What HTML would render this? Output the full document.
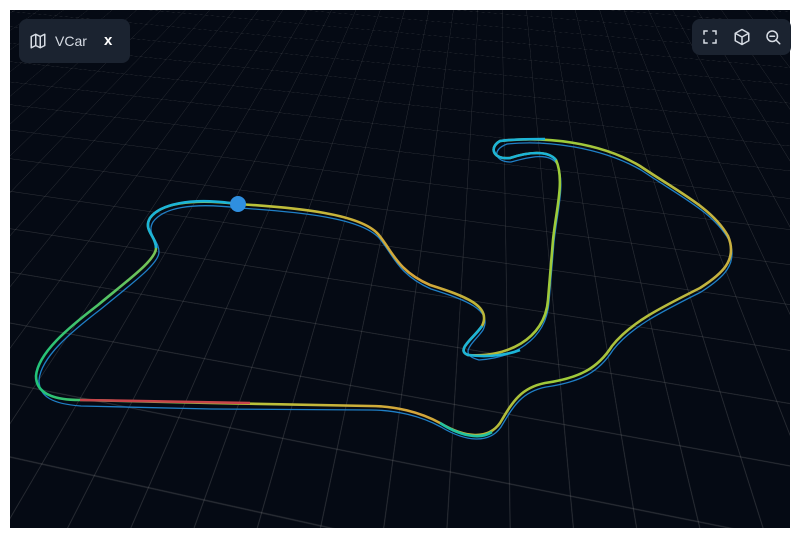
<!DOCTYPE html>
<html><head><meta charset="utf-8"><style>
html,body{margin:0;padding:0;background:#fff;width:801px;height:538px;overflow:hidden}
#c{position:absolute;left:10px;top:10px;width:780px;height:518px;background:#050a14;overflow:hidden;perspective:520px;perspective-origin:50% 0%}
#plane{position:absolute;left:-900px;top:-700px;width:2600px;height:2200px;
background-image:linear-gradient(rgba(150,150,150,.28) 1px,transparent 1px),linear-gradient(90deg,rgba(150,150,150,.28) 1px,transparent 1px);
background-size:70px 70px;transform:rotateX(58deg) rotateZ(9deg);transform-origin:50% 60%}
svg{position:absolute;left:0;top:0}
.panel{position:absolute;background:#1b2330;border-radius:8px;color:#d7dce4;font-family:"Liberation Sans",sans-serif}
</style></head><body>
<div id="c"><div id="plane"></div></div>
<svg width="801" height="538">
<defs><linearGradient id="g" x1="0" y1="0" x2="1" y2="0">
<stop offset="0" stop-color="#22c37a"/><stop offset=".3" stop-color="#b8c43a"/><stop offset=".55" stop-color="#d6a43a"/><stop offset=".75" stop-color="#9ccc3a"/><stop offset="1" stop-color="#c9b040"/></linearGradient></defs>
<path d="M238,206 C300,210 360,216 378,236 C392,252 396,272 430,287 C465,298 492,308 482,328 C474,340 455,352 478,358 C510,356 545,340 548,300 L553,240 C556,210 565,180 556,162 C548,150 528,155 510,160 C494,160 490,148 506,142 C545,138 600,145 640,168 C680,195 712,210 728,238 C738,262 722,276 700,290 C660,310 630,325 612,348 C598,370 580,380 545,385 C520,390 512,405 500,425 C488,442 465,440 440,425 C420,414 395,408 370,408 L210,407 L80,404 C52,402 38,395 38,378 C40,355 70,330 100,307 C130,282 158,262 158,250 C158,238 145,232 152,220 C162,206 190,200 238,206 Z" fill="none" stroke="#1f7fc6" stroke-width="1.3" transform="translate(1,2)"/>
<path d="M238,204 C300,208 360,214 378,234 C392,250 396,270 430,285 C465,296 492,306 482,326 C474,338 455,350 468,355 C505,358 545,340 548,300 L553,240 C556,210 565,180 556,160 C548,150 528,152 510,158 C494,160 488,148 500,141 C545,136 600,142 640,166 C680,193 712,208 728,236 C738,260 722,274 700,288 C660,308 630,323 612,346 C598,368 580,378 545,383 C520,388 512,403 500,423 C488,440 465,438 440,423 C420,412 395,406 370,406 L210,403 L80,400 C52,400 36,393 36,376 C38,353 68,328 98,305 C128,280 156,260 156,248 C156,236 143,230 150,218 C160,204 190,198 238,204 Z" fill="none" stroke="url(#g)" stroke-width="2.6"/>
<path d="M80,400 L250,403" stroke="#c8454a" stroke-width="2.6"/>
<path d="M556,160 C548,150 528,152 510,158 C494,160 488,148 500,141 C515,139 530,139 545,139" fill="none" stroke="#1cb4d8" stroke-width="2.6"/>
<path d="M482,326 C474,338 455,350 468,355 C490,358 510,354 520,350" fill="none" stroke="#1cb4d8" stroke-width="2.6"/>
<path d="M150,218 C160,204 190,198 230,203 M156,248 C156,236 143,230 150,218" fill="none" stroke="#1cb4d8" stroke-width="2.6"/>
<path d="M440,423 C460,436 480,440 492,432" fill="none" stroke="#22c3a0" stroke-width="2.6"/>
<circle cx="238" cy="204" r="8" fill="#2f8fe0"/>
</svg>
<div class="panel" style="left:19px;top:19px;width:111px;height:44px">
<svg width="18" height="18" viewBox="0 0 24 24" style="left:10px;top:13px" fill="none" stroke="#d7dce4" stroke-width="2" stroke-linejoin="round"><path d="M3 6l6-3 6 3 6-3v15l-6 3-6-3-6 3z M9 3v15 M15 6v15"/></svg>
<span style="position:absolute;left:36px;top:14px;font-size:14px">VCar</span>
<span style="position:absolute;left:85px;top:13px;font-size:15px;font-weight:bold;color:#fff">x</span>
</div>
<div class="panel" style="left:692px;top:19px;width:99px;height:36px">
<svg width="18" height="18" viewBox="0 0 24 24" style="left:9px;top:9px" fill="none" stroke="#d7dce4" stroke-width="2"><path d="M4 9V4h5M15 4h5v5M20 15v5h-5M9 20H4v-5"/></svg>
<svg width="18" height="18" viewBox="0 0 24 24" style="left:41px;top:9px" fill="none" stroke="#d7dce4" stroke-width="2" stroke-linejoin="round"><path d="M12 2l9 5v10l-9 5-9-5V7z M3 7l9 5 9-5 M12 12v10"/></svg>
<svg width="18" height="18" viewBox="0 0 24 24" style="left:72px;top:9px" fill="none" stroke="#d7dce4" stroke-width="2" stroke-linecap="round"><circle cx="11" cy="11" r="7"/><path d="M8 11h6M16 16l5 5"/></svg>
</div>
</body></html>
